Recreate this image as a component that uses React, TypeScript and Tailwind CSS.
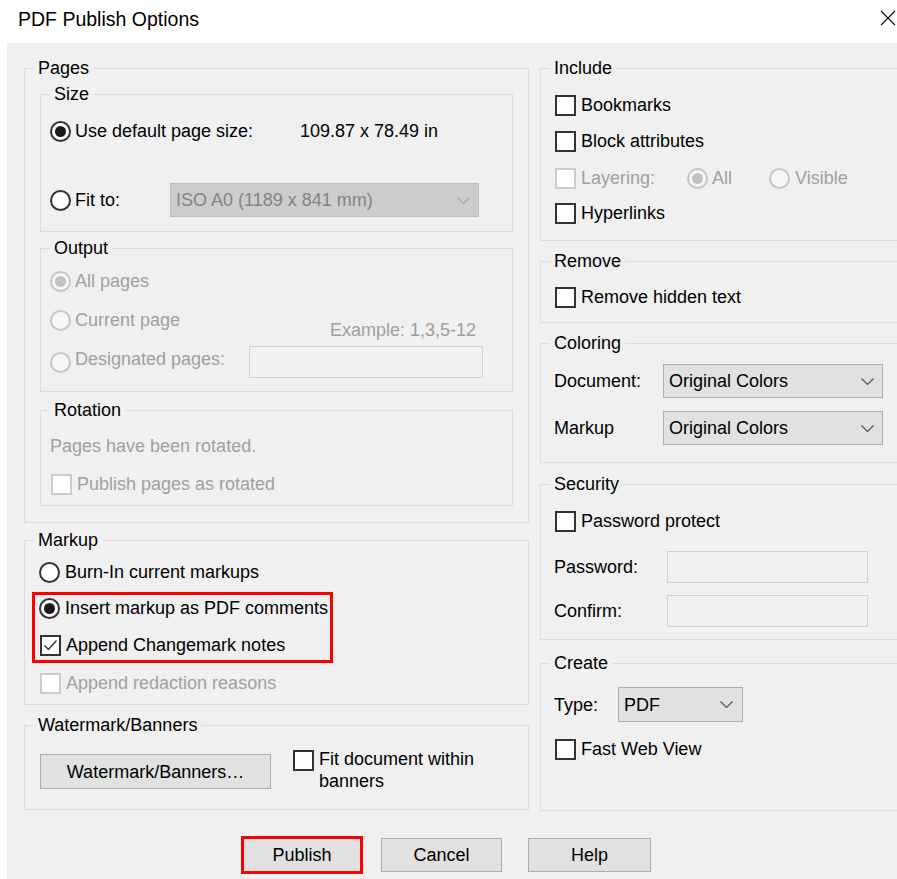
import React from "react";

type ToggleProps = { checked?: boolean; disabled?: boolean };

function Radio({ checked = false, disabled = false }: ToggleProps) {
  return (
    <span
      className={`flex h-[21px] w-[21px] shrink-0 items-center justify-center rounded-full border-2 ${
        disabled ? "border-[#c6c6c6] bg-[#f7f7f7]" : "border-[#333333] bg-white"
      }`}
    >
      {checked && (
        <span className={`h-[11px] w-[11px] rounded-full ${disabled ? "bg-[#c2c2c2]" : "bg-[#1a1a1a]"}`} />
      )}
    </span>
  );
}

function Check({ checked = false, disabled = false }: ToggleProps) {
  return (
    <span
      className={`flex h-[21px] w-[21px] shrink-0 items-center justify-center border-2 ${
        disabled ? "border-[#cccccc] bg-white" : "border-[#333333] bg-white"
      }`}
    >
      {checked && (
        <svg width="15" height="15" viewBox="0 0 15 15">
          <path d="M1.5 7.5 L5.5 11.5 L13.5 2.5" fill="none" stroke="#333333" strokeWidth="1.4" />
        </svg>
      )}
    </span>
  );
}

function Chevron({ color }: { color: string }) {
  return (
    <svg width="13" height="7" viewBox="0 0 13 7">
      <path d="M0.5 0.5 L6.5 6.5 L12.5 0.5" fill="none" stroke={color} strokeWidth="1.2" />
    </svg>
  );
}

function Group({
  title,
  className = "",
  children,
}: {
  title: string;
  className?: string;
  children?: React.ReactNode;
}) {
  return (
    <fieldset className={`m-0 min-w-0 border border-[#dcdcdc] p-0 ${className}`}>
      <legend className="ml-[9px] px-[4px] leading-[24px]">{title}</legend>
      {children}
    </fieldset>
  );
}

const dim = "text-[#a0a0a0]";

export default function App() {
  return (
    <div className="flex h-[879px] w-[897px] flex-col overflow-hidden bg-white font-['Liberation_Sans','Arimo',sans-serif] text-[18px] leading-[24px] text-black">
      {/* title bar */}
      <div className="flex h-[43px] shrink-0 items-center justify-between pl-[18px] pr-[1px]">
        <span className="pb-[5px] text-[19.5px]">PDF Publish Options</span>
        <svg width="16" height="16" viewBox="0 0 16 16" className="mb-[8px]">
          <path d="M1 1 L15 15 M15 1 L1 15" stroke="#111111" strokeWidth="1.2" />
        </svg>
      </div>

      {/* dialog body */}
      <div className="ml-[7px] flex flex-1 flex-col overflow-hidden bg-[#f0f0f0]">
        <div className="flex gap-[11px] pl-[17px] pt-[13px]">
          {/* left column */}
          <div className="flex w-[505px] shrink-0 flex-col">
            <Group title="Pages" className="h-[467px]">
              <div className="flex flex-col px-[15px]">
                <Group title="Size" className="mt-[2px] h-[150px]">
                  <div className="flex flex-col pl-[9px]">
                    <div className="mt-[7px] flex h-[36px] items-center">
                      <Radio checked />
                      <span className="ml-[4px] w-[225px] shrink-0">Use default page size:</span>
                      <span>109.87 x 78.49 in</span>
                    </div>
                    <div className="mt-[33px] flex h-[36px] items-center">
                      <Radio />
                      <span className="ml-[4px] w-[95px] shrink-0">Fit to:</span>
                      <div className="flex h-[34px] w-[309px] shrink-0 items-center justify-between border border-[#bfbfbf] bg-[#cccccc] pl-[5px] pr-[8px] text-[#838383]">
                        <span>ISO A0 (1189 x 841 mm)</span>
                        <Chevron color="#a9a9a9" />
                      </div>
                    </div>
                  </div>
                </Group>

                <Group title="Output" className="mt-[4px] h-[156px]">
                  <div className="flex flex-col pl-[9px]">
                    <div className="mt-[6px] flex h-[30px] items-center">
                      <Radio checked disabled />
                      <span className={`ml-[4px] ${dim}`}>All pages</span>
                    </div>
                    <div className="mt-[9px] flex h-[30px] items-center pr-[36px]">
                      <Radio disabled />
                      <span className={`ml-[4px] ${dim}`}>Current page</span>
                      <span className={`ml-auto mt-[20px] ${dim}`}>Example: 1,3,5-12</span>
                    </div>
                    <div className="mt-[11px] flex h-[32px] items-center">
                      <Radio disabled />
                      <span className={`mb-[7px] ml-[4px] w-[174px] shrink-0 ${dim}`}>Designated pages:</span>
                      <div className="h-[32px] w-[234px] shrink-0 border border-[#d0d0d0] bg-[#f0f0f0]" />
                    </div>
                  </div>
                </Group>

                <Group title="Rotation" className="mt-[6px] h-[108px]">
                  <div className="flex flex-col pl-[9px]">
                    <div className={`mt-[12px] h-[24px] ${dim}`}>Pages have been rotated.</div>
                    <div className="mt-[11px] flex h-[30px] items-center pl-[1px]">
                      <Check disabled />
                      <span className={`ml-[5px] ${dim}`}>Publish pages as rotated</span>
                    </div>
                  </div>
                </Group>
              </div>
            </Group>

            <Group title="Markup" className="mt-[5px] h-[177px]">
              <div className="flex flex-col">
                <div className="mt-[5px] flex h-[30px] items-center pl-[14px]">
                  <Radio />
                  <span className="ml-[5px]">Burn-In current markups</span>
                </div>
                <div className="ml-[7px] mt-[5px] flex w-[301px] flex-col border-[3px] border-[#ff0000] pb-[2px] pl-[4px]">
                  <div className="flex h-[26px] items-center">
                    <Radio checked />
                    <span className="ml-[5px] whitespace-nowrap">Insert markup as PDF comments</span>
                  </div>
                  <div className="mt-[11px] flex h-[26px] items-center pl-[1px]">
                    <Check checked />
                    <span className="ml-[5px] whitespace-nowrap">Append Changemark notes</span>
                  </div>
                </div>
                <div className="mt-[5px] flex h-[30px] items-center pl-[15px]">
                  <Check disabled />
                  <span className={`ml-[5px] ${dim}`}>Append redaction reasons</span>
                </div>
              </div>
            </Group>

            <Group title="Watermark/Banners" className="mt-[8px] h-[97px]">
              <div className="mt-[13px] flex items-start pl-[15px]">
                <button className="mt-[4px] flex h-[35px] w-[231px] shrink-0 items-center justify-center border border-[#adadad] bg-[#e1e1e1]">
                  Watermark/Banners…
                </button>
                <div className="ml-[22px]">
                  <Check />
                </div>
                <span className="-mt-[2px] ml-[5px] leading-[22px]">
                  Fit document within
                  <br />
                  banners
                </span>
              </div>
            </Group>
          </div>

          {/* right column */}
          <div className="flex w-[380px] shrink-0 flex-col">
            <Group title="Include" className="h-[185px]">
              <div className="flex flex-col pl-[14px]">
                <div className="mt-[10px] flex h-[30px] items-center">
                  <Check />
                  <span className="ml-[5px]">Bookmarks</span>
                </div>
                <div className="mt-[6px] flex h-[30px] items-center">
                  <Check />
                  <span className="ml-[5px]">Block attributes</span>
                </div>
                <div className="mt-[7px] flex h-[30px] items-center">
                  <Check disabled />
                  <span className={`ml-[5px] w-[106px] shrink-0 ${dim}`}>Layering:</span>
                  <Radio checked disabled />
                  <span className={`ml-[4px] w-[57px] shrink-0 ${dim}`}>All</span>
                  <Radio disabled />
                  <span className={`ml-[5px] ${dim}`}>Visible</span>
                </div>
                <div className="mt-[5px] flex h-[30px] items-center">
                  <Check />
                  <span className="ml-[5px]">Hyperlinks</span>
                </div>
              </div>
            </Group>

            <Group title="Remove" className="mt-[8px] h-[74px]">
              <div className="mt-[9px] flex h-[30px] items-center pl-[14px]">
                <Check />
                <span className="ml-[5px]">Remove hidden text</span>
              </div>
            </Group>

            <Group title="Coloring" className="mt-[8px] h-[132px]">
              <div className="flex flex-col pl-[13px]">
                <div className="mt-[9px] flex h-[34px] items-center">
                  <span className="w-[109px] shrink-0">Document:</span>
                  <div className="flex h-[34px] w-[220px] shrink-0 items-center justify-between border border-[#adadad] bg-[#e1e1e1] pl-[5px] pr-[8px]">
                    <span>Original Colors</span>
                    <Chevron color="#555555" />
                  </div>
                </div>
                <div className="mt-[13px] flex h-[34px] items-center">
                  <span className="w-[109px] shrink-0">Markup</span>
                  <div className="flex h-[34px] w-[220px] shrink-0 items-center justify-between border border-[#adadad] bg-[#e1e1e1] pl-[5px] pr-[8px]">
                    <span>Original Colors</span>
                    <Chevron color="#555555" />
                  </div>
                </div>
              </div>
            </Group>

            <Group title="Security" className="mt-[9px] h-[168px]">
              <div className="flex flex-col">
                <div className="mt-[10px] flex h-[30px] items-center pl-[14px]">
                  <Check />
                  <span className="ml-[5px]">Password protect</span>
                </div>
                <div className="mt-[15px] flex h-[32px] items-center pl-[13px]">
                  <span className="w-[113px] shrink-0">Password:</span>
                  <div className="h-[32px] w-[201px] shrink-0 border border-[#d0d0d0] bg-[#f0f0f0]" />
                </div>
                <div className="mt-[12px] flex h-[32px] items-center pl-[13px]">
                  <span className="w-[113px] shrink-0">Confirm:</span>
                  <div className="h-[32px] w-[201px] shrink-0 border border-[#d0d0d0] bg-[#f0f0f0]" />
                </div>
              </div>
            </Group>

            <Group title="Create" className="mt-[11px] h-[160px]">
              <div className="flex flex-col">
                <div className="mt-[12px] flex h-[35px] items-center pl-[13px]">
                  <span className="w-[64px] shrink-0">Type:</span>
                  <div className="flex h-[35px] w-[125px] shrink-0 items-center justify-between border border-[#adadad] bg-[#e1e1e1] pl-[5px] pr-[9px]">
                    <span>PDF</span>
                    <Chevron color="#555555" />
                  </div>
                </div>
                <div className="mt-[12px] flex h-[30px] items-center pl-[14px]">
                  <Check />
                  <span className="ml-[5px]">Fast Web View</span>
                </div>
              </div>
            </Group>
          </div>
        </div>

        {/* action buttons */}
        <div className="mt-[25px] flex h-[38px] items-center pl-[234px]">
          <button className="flex h-[38px] w-[122px] shrink-0 items-center justify-center border-[3px] border-[#ff0000] bg-[#e1e1e1]">
            Publish
          </button>
          <button className="ml-[18px] flex h-[34px] w-[121px] shrink-0 items-center justify-center border border-[#adadad] bg-[#e1e1e1]">
            Cancel
          </button>
          <button className="ml-[26px] flex h-[34px] w-[123px] shrink-0 items-center justify-center border border-[#adadad] bg-[#e1e1e1]">
            Help
          </button>
        </div>
      </div>
    </div>
  );
}
